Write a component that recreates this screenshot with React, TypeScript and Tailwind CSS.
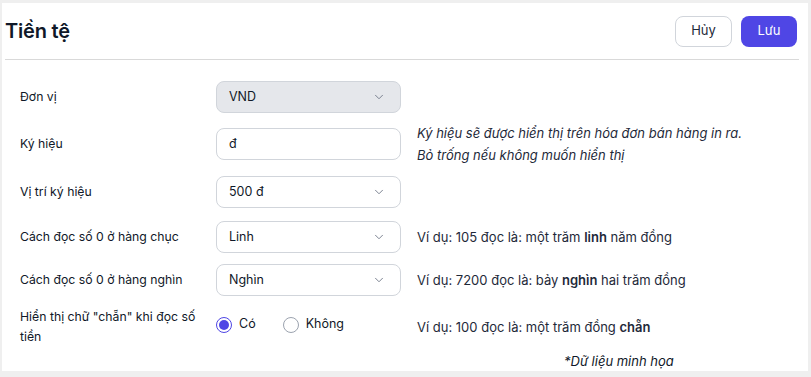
import React, { useState } from "react";
import { ChevronDown } from "lucide-react";

const font = { fontFamily: "Inter, 'Noto Sans', sans-serif" };

const SelectBox = ({ value, disabled }: { value: string; disabled?: boolean }) => (
  <div
    className={`flex items-center justify-between w-[185px] h-[32px] pl-[12px] pr-[14px] rounded-[8px] border text-[12.5px] text-gray-900 ${
      disabled ? "bg-[#e5e7eb] border-[#d1d5db]" : "bg-white border-[#d1d5db]"
    }`}
  >
    <span>{value}</span>
    <ChevronDown className="w-[14px] h-[14px] text-gray-500" strokeWidth={1.5} />
  </div>
);

const Row = ({
  label,
  children,
  hint,
  className = "",
}: {
  label: React.ReactNode;
  children: React.ReactNode;
  hint?: React.ReactNode;
  className?: string;
}) => (
  <div className={`flex items-center ${className}`}>
    <div className="w-[196px] text-[12.25px] leading-[20px] text-gray-900 pr-[8px]">{label}</div>
    <div className="w-[185px] shrink-0">{children}</div>
    <div className="pl-[16px] h-[32px] flex items-center text-[13px] leading-[22px] text-gray-800 whitespace-nowrap">
      {hint}
    </div>
  </div>
);

const Radio = ({ checked, label, onClick, className = "" }: { checked: boolean; label: string; onClick: () => void; className?: string }) => (
  <button onClick={onClick} className={`flex items-center gap-[7px] ${className}`}>
    <span
      className={`w-[16px] h-[16px] rounded-full border flex items-center justify-center ${
        checked ? "border-[#4f46e5]" : "border-[#9ca3af]"
      }`}
    >
      {checked && <span className="w-[10px] h-[10px] rounded-full bg-[#4f46e5]" />}
    </span>
    {label}
  </button>
);

export default function App() {
  const [even, setEven] = useState(true);

  return (
    <div className="w-[811px] h-[377px] bg-[#efefef] pt-[3px] pl-[2px]" style={font}>
      <div className="w-[806px] h-[368px] bg-white">
        <div className="mx-[3px] w-[794px] flex items-center justify-between h-[57px] border-b border-[#d9d9d9]">
          <h1 className="text-[20px] font-semibold text-gray-900 tracking-[-0.2px]">Tiền tệ</h1>
          <div className="flex items-center gap-[9px] pr-[2px]">
            <button className="w-[57px] h-[31px] rounded-[8px] border border-[#d1d5db] bg-white text-[13px] text-gray-800">
              Hủy
            </button>
            <button className="w-[56px] h-[31px] rounded-[8px] bg-[#4f46e5] text-[13px] text-white">
              Lưu
            </button>
          </div>
        </div>

        <div className="pl-[18px] pt-[21px]">
          <Row label="Đơn vị">
            <SelectBox value="VND" disabled />
          </Row>

          <Row
            className="mt-[15px]"
            label="Ký hiệu"
            hint={
              <div className="italic text-[13px] leading-[22px]">
                <div>Ký hiệu sẽ được hiển thị trên hóa đơn bán hàng in ra.</div>
                <div>Bỏ trống nếu không muốn hiển thị</div>
              </div>
            }
          >
            <div className="flex items-center w-[185px] h-[32px] px-[12px] rounded-[8px] border border-[#d1d5db] bg-white text-[12.5px] text-gray-900">
              đ
            </div>
          </Row>

          <Row className="mt-[16px]" label="Vị trí ký hiệu">
            <SelectBox value="500 đ" />
          </Row>

          <Row
            className="mt-[13px]"
            label="Cách đọc số 0 ở hàng chục"
            hint={
              <span>
                Ví dụ: 105 đọc là: một trăm <b className="font-semibold">linh</b> năm đồng
              </span>
            }
          >
            <SelectBox value="Linh" />
          </Row>

          <Row
            className="mt-[11px]"
            label="Cách đọc số 0 ở hàng nghìn"
            hint={
              <span>
                Ví dụ: 7200 đọc là: bảy <b className="font-semibold">nghìn</b> hai trăm đồng
              </span>
            }
          >
            <SelectBox value="Nghìn" />
          </Row>

          <Row
            className="mt-[11px]"
            label='Hiển thị chữ "chẵn" khi đọc số tiền'
            hint={
              <span>
                Ví dụ: 100 đọc là: một trăm đồng <b className="font-semibold">chẵn</b>
              </span>
            }
          >
            <div className="flex items-center text-[12.5px] text-gray-900 -mt-[5px]">
              <Radio checked={even} label="Có" onClick={() => setEven(true)} />
              <Radio checked={!even} label="Không" onClick={() => setEven(false)} className="ml-[27px]" />
            </div>
          </Row>

          <div className="mt-[4px] pl-[544px] text-[13px] leading-[20px] italic text-gray-900">*Dữ liệu minh họa</div>
        </div>
      </div>
    </div>
  );
}
